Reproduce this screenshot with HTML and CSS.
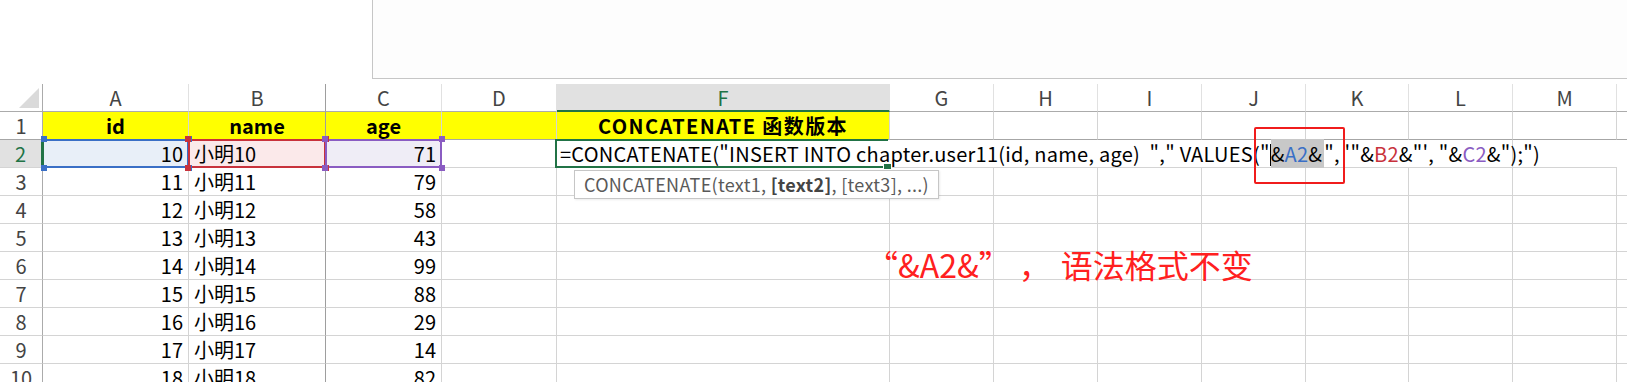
FILE: index.html
```html
<!DOCTYPE html>
<html lang="zh-CN">
<head>
  <meta charset="UTF-8">
  <title>CONCATENATE 函数版本</title>
  <link rel="stylesheet" href="styles.css">
</head>
<body>

  <div class="topbar">
    <div class="spacer"></div>
    <div class="panel"></div>
  </div>

  <div class="sheet">
    <!-- column headers -->
    <div class="cell corner"><span class="tri"></span></div>
    <div class="cell colhead">A</div>
    <div class="cell colhead freeze-col">B</div>
    <div class="cell colhead">C</div>
    <div class="cell colhead">D</div>
    <div class="cell colhead active">F</div>
    <div class="cell colhead">G</div>
    <div class="cell colhead">H</div>
    <div class="cell colhead">I</div>
    <div class="cell colhead">J</div>
    <div class="cell colhead">K</div>
    <div class="cell colhead">L</div>
    <div class="cell colhead">M</div>
    <div class="cell colhead last"></div>

    <!-- row 1 -->
    <div class="cell rowhead freeze-row">1</div>
    <div class="cell title freeze-row">id</div>
    <div class="cell title freeze-row freeze-col">name</div>
    <div class="cell title freeze-row">age</div>
    <div class="cell title freeze-row"></div>
    <div class="cell title wide freeze-row">CONCATENATE 函数版本</div>
    <div class="cell freeze-row"></div>
    <div class="cell freeze-row"></div>
    <div class="cell freeze-row"></div>
    <div class="cell freeze-row"></div>
    <div class="cell freeze-row"></div>
    <div class="cell freeze-row"></div>
    <div class="cell freeze-row"></div>
    <div class="cell freeze-row last"></div>

    <!-- row 2 (editing) -->
    <div class="cell rowhead active">2</div>
    <div class="cell num ref ref-a">10
      <i class="h tl"></i><i class="h tr"></i><i class="h bl"></i><i class="h br"></i>
    </div>
    <div class="cell txt ref ref-b freeze-col">小明10
      <i class="h tl"></i><i class="h tr"></i><i class="h bl"></i><i class="h br"></i>
    </div>
    <div class="cell num ref ref-c">71
      <i class="h tl"></i><i class="h tr"></i><i class="h bl"></i><i class="h br"></i>
    </div>
    <div class="cell"></div>
    <div class="cell editing">
      <div class="editbox">
        <span class="formula">=CONCATENATE("INSERT INTO chapter.user11(id, name, age)&nbsp;&nbsp;","&nbsp;VALUES("<span class="caret"></span><span class="sel">&amp;<span class="c-a">A2</span>&amp;</span>", '"&amp;<span class="c-b">B2</span>&amp;"', "&amp;<span class="c-c">C2</span>&amp;");")</span>
        <i class="handle"></i>
      </div>
      <div class="tip">CONCATENATE(text1, <b>[text2]</b>, [text3], ...)</div>
    </div>
    <div class="cell last"></div>
  </div>

  <div class="sheet" id="rows"></div>

  <div class="mark-box"></div>
  <div class="note">“&amp;A2&amp;”<span class="comma">，</span>语法格式不变</div>

  <script>
    const dados = [
      [11, 79], [12, 58], [13, 43], [14, 99], [15, 88],
      [16, 29], [17, 14], [18, 82]
    ];
    const corpo = document.getElementById('rows');

    dados.forEach((d, i) => {
      let html = `
        <div class="cell rowhead">${i + 3}</div>
        <div class="cell num">${d[0]}</div>
        <div class="cell txt freeze-col">小明${d[0]}</div>
        <div class="cell num">${d[1]}</div>`;
      for (let c = 0; c < 9; c++) {
        html += '<div class="cell"></div>';
      }
      html += '<div class="cell last"></div>';
      corpo.insertAdjacentHTML('beforeend', html);
    });
  </script>
</body>
</html>
```

FILE: styles.css
```css
body {
  margin: 0;
  background: #fff;
  font-family: "Noto Sans CJK SC", "Noto Sans", sans-serif;
  color: #000;
  overflow: hidden;
}

.topbar {
  display: flex;
  height: 84px;
}
.topbar .spacer {
  width: 372px;
}
.panel {
  flex: 1;
  height: 78px;
  background: #fdfdfd;
  border-left: 1px solid #c6c6c6;
  border-bottom: 1px solid #c6c6c6;
}

.sheet {
  display: grid;
  grid-template-columns: 43px 146px 137px 116px 115px 333px 104px 104px 104px 104px 103px 104px 104px 1fr;
  grid-auto-rows: 28px;
}

.cell {
  position: relative;
  box-sizing: border-box;
  border-right: 1px solid #d4d4d4;
  border-bottom: 1px solid #d4d4d4;
  font-size: 20px;
  line-height: 27px;
  white-space: nowrap;
  padding: 0 5px;
}
.cell.last {
  border-right: none;
}

.corner {
  border-right: 1px solid #ababab;
  border-bottom: 1px solid #ababab;
}
.tri {
  position: absolute;
  right: 3px;
  bottom: 3px;
  width: 0;
  height: 0;
  border-left: 20px solid transparent;
  border-bottom: 20px solid #dadada;
}

.colhead {
  text-align: center;
  color: #444;
  border-right-color: #e1e1e1;
  border-bottom: 1px solid #ababab;
}
.colhead.active {
  background: #e1e1e1;
  color: #217346;
  border-bottom: 2px solid #217346;
}
.colhead.freeze-col {
  border-right-color: #9e9e9e;
}

.rowhead {
  text-align: center;
  color: #444;
  border-right: 1px solid #ababab;
  padding: 0;
}
.rowhead.active {
  background: #e1e1e1;
  color: #217346;
  border-right: 2px solid #217346;
}

.title {
  background: #ffff00;
  font-weight: bold;
  text-align: center;
}
.title.wide {
  letter-spacing: 1.4px;
}

.freeze-row {
  border-bottom-color: #a6a6a6;
}
.freeze-col {
  border-right-color: #9e9e9e;
}

.num {
  text-align: right;
}

/* referenced cells in the formula */
.ref::before {
  content: "";
  position: absolute;
  left: -1px;
  top: -1px;
  right: -1px;
  bottom: -1px;
  border: 2px solid;
  pointer-events: none;
}
.ref-a { background: #e8eff8; }
.ref-a::before { border-color: #3a6fc6; border-left-color: #217346; }
.ref-b { background: #fbe9ea; }
.ref-b::before { border-color: #c8323c; }
.ref-c { background: #efedf6; }
.ref-c::before { border-color: #8a5cc2; }

.h {
  position: absolute;
  width: 6px;
  height: 6px;
  z-index: 2;
}
.ref-a .h { background: #3a6fc6; }
.ref-b .h { background: #c8323c; }
.ref-c .h { background: #8a5cc2; }
.h.tl { left: -4px; top: -4px; }
.h.tr { right: -4px; top: -4px; }
.h.bl { left: -4px; bottom: -4px; }
.h.br { right: -4px; bottom: -4px; }
.ref-a .h.tl, .ref-a .h.bl { left: -2px; }

/* the cell being edited, its text runs over G..M */
.editing {
  grid-column: span 7;
  background: #fff;
  padding: 0;
  z-index: 3;
}
.editbox {
  position: absolute;
  left: -2px;
  top: -1px;
  width: 333px;
  height: 29px;
  box-sizing: border-box;
  border: 2px solid #217346;
  border-right: none;
}
.formula {
  position: absolute;
  left: 3px;
  top: -1px;
  line-height: 27px;
  letter-spacing: 0.26px;
}
.caret {
  display: inline-block;
  width: 1px;
  height: 22px;
  background: #000;
  vertical-align: -4px;
}
.sel {
  background: #c8c8c8;
  padding-right: 2px;
}
.c-a { color: #3a6fc6; }
.c-b { color: #c8323c; }
.c-c { color: #8a5cc2; }
.handle {
  position: absolute;
  right: -4px;
  bottom: -4px;
  width: 7px;
  height: 5px;
  background: #217346;
  border: 1px solid #fff;
}

.tip {
  position: absolute;
  left: 17px;
  top: 30px;
  height: 29px;
  padding: 0 9px;
  box-sizing: border-box;
  background: #fff;
  border: 1px solid #c6c6c6;
  color: #595959;
  font-size: 18px;
  line-height: 27px;
  letter-spacing: 0.3px;
  box-shadow: 1px 1px 2px rgba(0, 0, 0, 0.08);
}
.tip b {
  color: #444;
}

.mark-box {
  position: absolute;
  left: 1254px;
  top: 127px;
  width: 91px;
  height: 57px;
  box-sizing: border-box;
  border: 2px solid #f01c1c;
  border-radius: 2px;
  z-index: 5;
}

.note {
  position: absolute;
  left: 866px;
  top: 242px;
  color: #ff2020;
  font-size: 32px;
  line-height: 44px;
  white-space: pre;
}
.note .comma {
  margin-left: 24px;
  margin-right: 10px;
}
```
